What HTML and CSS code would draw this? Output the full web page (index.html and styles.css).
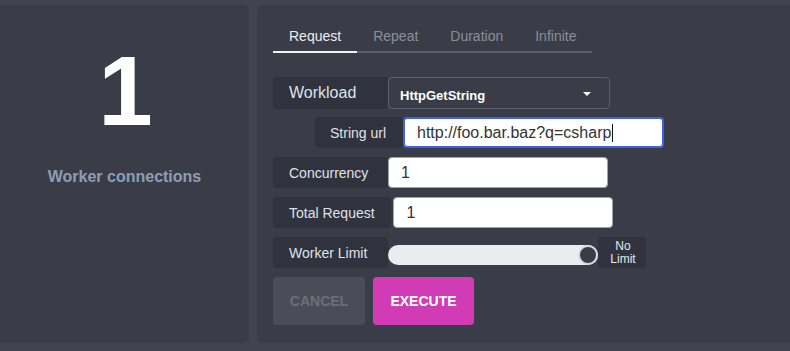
FILE: index.html
```html
<!DOCTYPE html>
<html>
<head>
<meta charset="utf-8">
<link rel="stylesheet" href="styles.css">
</head>
<body>
<div class="page">
  <section class="stat-panel">
    <div class="stat-value">1</div>
    <div class="stat-label">Worker connections</div>
  </section>
  <section class="main-panel">
    <nav class="tabs">
      <div class="tab active">Request</div>
      <div class="tab">Repeat</div>
      <div class="tab">Duration</div>
      <div class="tab">Infinite</div>
    </nav>
    <div class="form">
      <div class="row">
        <div class="label label-lg">Workload</div>
        <div class="select">
          <span class="select-text">HttpGetString</span>
          <span class="caret"></span>
        </div>
      </div>
      <div class="row row-indent">
        <div class="label label-sm">String url</div>
        <div class="input input-focus">http://foo.bar.baz?q=csharp<span class="cursor"></span></div>
      </div>
      <div class="row">
        <div class="label">Concurrency</div>
        <div class="input">1</div>
      </div>
      <div class="row">
        <div class="label">Total Request</div>
        <div class="input">1</div>
      </div>
      <div class="row">
        <div class="label">Worker Limit</div>
        <div class="slider"><span class="thumb"></span></div>
        <div class="slider-value"><span>No</span><span>Limit</span></div>
      </div>
      <div class="actions">
        <button class="btn btn-cancel">CANCEL</button>
        <button class="btn btn-execute">EXECUTE</button>
      </div>
    </div>
  </section>
</div>
</body>
</html>
```
FILE: styles.css
```css
* { box-sizing: border-box; }
html, body {
  margin: 0;
  padding: 0;
  background: #41444e;
  font-family: "Liberation Sans", Arial, sans-serif;
  overflow: hidden;
}
.page {
  display: flex;
  gap: 8px;
  padding-top: 5px;
  width: 800px;
  height: 351px;
}
.stat-panel {
  width: 249px;
  height: 338px;
  background: #3a3d48;
  border-radius: 0 5px 5px 0;
  display: flex;
  flex-direction: column;
  align-items: center;
  padding-top: 34px;
}
.stat-value {
  font-size: 98px;
  font-weight: bold;
  color: #ffffff;
  line-height: 104px;
  margin-left: 2px;
}
.stat-label {
  margin-top: 25px;
  font-size: 16px;
  font-weight: bold;
  color: #8d9db6;
}
.main-panel {
  width: 543px;
  height: 338px;
  background: #3a3d48;
  border-radius: 5px 0 0 5px;
  padding: 18px 0 0 16px;
}
.tabs {
  display: flex;
  width: 319px;
  border-bottom: 2px solid #5c606a;
}
.tab {
  padding: 5px 16px 7px;
  font-size: 14px;
  line-height: 16px;
  color: #8b8f99;
  margin-bottom: -2px;
  border-bottom: 2px solid transparent;
}
.tab.active {
  color: #eceef2;
  border-bottom-color: #f0f1f4;
}
.form {
  margin-top: 24px;
  display: flex;
  flex-direction: column;
  gap: 9px;
}
.row {
  display: flex;
  height: 31px;
}
.row-indent { margin-left: 42px; }
.label {
  min-width: 115px;
  padding: 0 16px;
  background: #30333d;
  border-radius: 4px;
  color: #dfe2e8;
  font-size: 14px;
  display: flex;
  align-items: center;
}
.label-lg { font-size: 16px; height: 32px; }
.label-sm { min-width: 88px; padding: 0 15px; }
.select {
  width: 222px;
  height: 32px;
  border: 1px solid #5c606a;
  border-radius: 4px;
  display: flex;
  align-items: center;
  justify-content: space-between;
  padding: 4px 18px 0 11px;
}
.select-text {
  font-size: 13px;
  font-weight: bold;
  color: #ffffff;
}
.caret {
  width: 0;
  height: 0;
  border-left: 4px solid transparent;
  border-right: 4px solid transparent;
  border-top: 4px solid #ffffff;
  margin-top: -3px;
}
.input {
  width: 220px;
  background: #ffffff;
  border: 1px solid #9ea2aa;
  border-radius: 4px;
  padding: 0 12px;
  font-size: 16px;
  color: #333333;
  display: flex;
  align-items: center;
}
.row:nth-child(4) .input { margin-left: 2px; padding-left: 13px; }
.input-focus {
  width: 261px;
  border: 2px solid #4161e4;
  padding-left: 12px;
}
.cursor {
  display: inline-block;
  width: 1px;
  height: 18px;
  background: #111111;
  margin-left: 1px;
}
.slider {
  position: relative;
  width: 210px;
  height: 20px;
  margin-top: 8px;
  background: #ebecf0;
  border-radius: 10px;
}
.thumb {
  position: absolute;
  right: 0;
  top: 0;
  width: 20px;
  height: 20px;
  border-radius: 50%;
  background: #3a3d48;
  border: 2px solid #d8d9de;
}
.slider-value {
  width: 48px;
  background: #30333d;
  border-radius: 4px;
  color: #e4e7ee;
  font-size: 12px;
  line-height: 13px;
  text-align: center;
  display: flex;
  flex-direction: column;
  align-items: center;
  justify-content: center;
  padding-left: 2px;
}
.actions {
  display: flex;
  gap: 8px;
  margin-top: 0;
}
.btn {
  height: 48px;
  border: none;
  border-radius: 4px;
  font-family: "Liberation Sans", Arial, sans-serif;
  font-size: 14px;
  font-weight: bold;
}
.btn-cancel {
  width: 92px;
  background: #4a4d58;
  color: #6c6f79;
}
.btn-execute {
  width: 101px;
  background: #d23bb6;
  color: #ffffff;
}
```
